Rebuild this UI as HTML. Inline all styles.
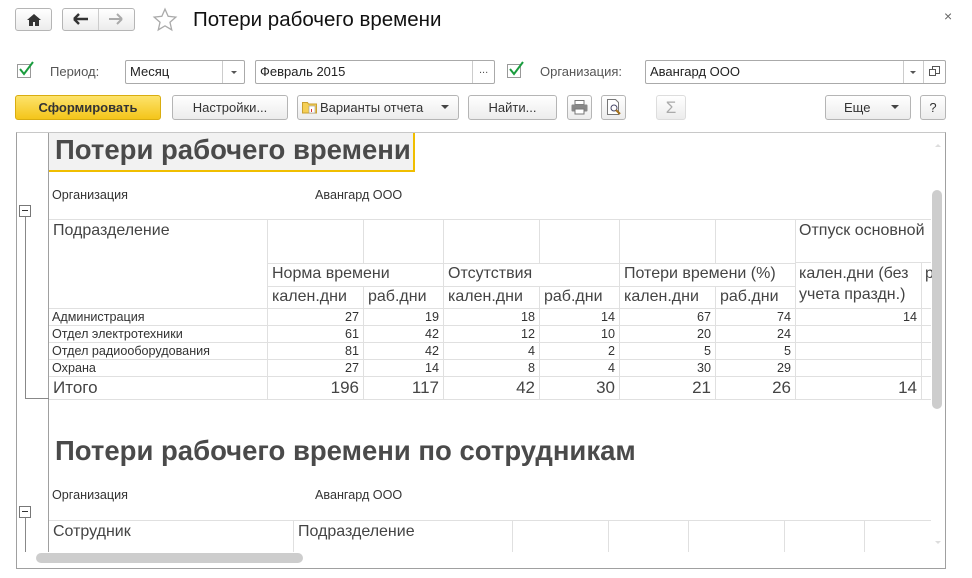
<!DOCTYPE html>
<html><head><meta charset="utf-8"><style>
*{margin:0;padding:0;box-sizing:border-box}
body{width:972px;height:578px;background:#fff;font-family:"Liberation Sans",Arial,sans-serif;position:relative;overflow:hidden;color:#333}
.a{position:absolute}
.btn{position:absolute;border:1px solid #b5b5b5;border-radius:3px;background:linear-gradient(#fff,#ececec);font-size:13px;color:#333;text-align:center;line-height:23px;height:25px}
.inp{position:absolute;border:1px solid #aaa;border-radius:2px;background:#fff;height:24px;font-size:13px;color:#222;line-height:22px;padding-left:4px}
.chk{position:absolute;width:14px;height:14px;border:1px solid #999;background:#fff}
.lbl{position:absolute;font-size:13px;color:#555}
.hl{position:absolute;height:1px;background:#e0e0e0}
.vl{position:absolute;width:1px;background:#e0e0e0}
.t{position:absolute;font-size:16px;color:#444;white-space:nowrap}
.s{position:absolute;font-size:12.6px;color:#333;white-space:nowrap}
.r{text-align:right}
</style></head><body>
<div class="btn" style="left:15px;top:8px;width:37px;height:23px;line-height:21px">
<svg width="14" height="12" viewBox="0 0 14 12" style="margin-top:5px"><path d="M7 0L0 6h2v6h4V8h2v4h4V6h2z" fill="#333"/></svg></div>
<div class="btn" style="left:62px;top:8px;width:73px;height:23px"></div>
<div class="a" style="left:98px;top:9px;width:1px;height:21px;background:#ccc"></div>
<svg class="a" style="left:73px;top:13px" width="16" height="12"><path d="M1 6h14M1 6l5-5M1 6l5 5" stroke="#333" stroke-width="2.4" fill="none"/></svg>
<svg class="a" style="left:108px;top:13px" width="16" height="12"><path d="M1 6h13M14 6l-5-5M14 6l-5 5" stroke="#aaa" stroke-width="2" fill="none"/></svg>
<svg class="a" style="left:152px;top:7px" width="26" height="26" viewBox="0 0 24 24"><path d="M12 2l2.9 6.6 7.1.7-5.4 4.8 1.6 7L12 17.4 5.8 21.1l1.6-7L2 9.3l7.1-.7z" fill="none" stroke="#aaa" stroke-width="1.2"/></svg>
<div class="a" style="left:193px;top:8px;font-size:20.5px;color:#111">Потери рабочего времени</div>
<div class="a" style="left:944px;top:8px;font-size:14px;color:#666">×</div>
<div class="chk" style="left:17px;top:64px"></div>
<svg class="a" style="left:17px;top:60px" width="18" height="18"><path d="M3 9l4 5 9-12" stroke="#1a9c3e" stroke-width="2" fill="none"/></svg>
<div class="lbl" style="left:50px;top:64px">Период:</div>
<div class="inp" style="left:125px;top:60px;width:120px">Месяц</div>
<div class="a" style="left:222px;top:61px;width:1px;height:22px;background:#ccc"></div>
<div class="a" style="left:231px;top:71px;border:3px solid transparent;border-top:3px solid #555"></div>
<div class="inp" style="left:255px;top:60px;width:240px">Февраль 2015</div>
<div class="a" style="left:472px;top:61px;width:1px;height:22px;background:#ccc"></div>
<div class="a" style="left:479px;top:64px;font-size:11px;color:#555">...</div>
<div class="chk" style="left:507px;top:64px"></div>
<svg class="a" style="left:507px;top:60px" width="18" height="18"><path d="M3 9l4 5 9-12" stroke="#1a9c3e" stroke-width="2" fill="none"/></svg>
<div class="lbl" style="left:540px;top:64px">Организация:</div>
<div class="inp" style="left:645px;top:60px;width:301px">Авангард ООО</div>
<div class="a" style="left:903px;top:61px;width:1px;height:22px;background:#ccc"></div>
<div class="a" style="left:923px;top:61px;width:1px;height:22px;background:#ccc"></div>
<div class="a" style="left:910px;top:71px;border:3px solid transparent;border-top:3px solid #555"></div>
<svg class="a" style="left:929px;top:66px" width="11" height="11"><rect x="3.5" y="0.5" width="7" height="7" fill="none" stroke="#555"/><rect x="0.5" y="3.5" width="6" height="6" fill="#fff" stroke="#555"/></svg>
<div class="btn" style="left:15px;top:95px;width:146px;background:linear-gradient(#fde36b,#f4c51a);border-color:#d9ad10;font-weight:bold;color:#333">Сформировать</div>
<div class="btn" style="left:172px;top:95px;width:116px">Настройки...</div>
<div class="btn" style="left:297px;top:95px;width:162px;text-align:left;padding-left:22px">Варианты отчета</div>
<svg class="a" style="left:302px;top:100px" width="16" height="14"><path d="M0.5 2.5h5l1 1.5h8v9h-14z" fill="#f5cf55" stroke="#c9a030"/><rect x="7" y="6" width="6" height="7" fill="#fff" stroke="#999" stroke-width=".6"/><rect x="9" y="9" width="1" height="3" fill="#d33"/></svg>
<div class="a" style="left:441px;top:105px;border:4px solid transparent;border-top:4px solid #444"></div>
<div class="btn" style="left:468px;top:95px;width:89px">Найти...</div>
<div class="btn" style="left:567px;top:95px;width:25px"></div>
<svg class="a" style="left:571px;top:100px" width="17" height="15"><rect x="4" y="0.5" width="9" height="4" fill="#fff" stroke="#777"/><rect x="0.5" y="4.5" width="16" height="7" rx="1" fill="#888"/><rect x="4" y="9" width="9" height="5" fill="#fff" stroke="#777"/></svg>
<div class="btn" style="left:601px;top:95px;width:25px"></div>
<svg class="a" style="left:606px;top:99px" width="16" height="17"><path d="M1.5 .5h8l3 3v12h-11z" fill="#fff" stroke="#777"/><circle cx="8" cy="9" r="3" fill="none" stroke="#446"/><path d="M10 11l4 4" stroke="#a5711a" stroke-width="2"/></svg>
<div class="btn" style="left:656px;top:95px;width:30px;color:#aaa;font-size:17px;border-color:#ddd">Σ</div>
<div class="btn" style="left:825px;top:95px;width:86px;text-align:left;padding-left:18px">Еще</div>
<div class="a" style="left:891px;top:105px;border:4px solid transparent;border-top:4px solid #444"></div>
<div class="btn" style="left:920px;top:95px;width:26px">?</div>
<div class="a" style="left:16px;top:132px;width:930px;height:437px;border:1px solid #a0a0a0;border-top-color:#c8c8c8"></div>
<div class="a" style="left:48px;top:133px;width:1px;height:435px;background:#a0a0a0"></div>
<div class="a" style="left:49px;top:133px;width:366px;height:39px;background:#f2f2f2;border-right:2px solid #f0be00;border-bottom:2px solid #f0be00"></div>
<div class="a" style="left:55px;top:134px;font-size:27.5px;font-weight:bold;color:#4a4a4a">Потери рабочего времени</div>
<div class="s" style="left:52px;top:188px">Организация</div>
<div class="s" style="left:315px;top:188px">Авангард ООО</div>
<div class="a" style="left:19px;top:205px;width:12px;height:12px;border:1px solid #777;background:#fff"></div>
<div class="a" style="left:22px;top:210px;width:6px;height:1px;background:#333"></div>
<div class="a" style="left:25px;top:217px;width:1px;height:182px;background:#888"></div>
<div class="a" style="left:25px;top:398px;width:24px;height:1px;background:#888"></div>
<div class="hl" style="left:49px;top:219px;width:882px"></div>
<div class="hl" style="left:267px;top:263px;width:528px"></div>
<div class="hl" style="left:267px;top:286px;width:528px"></div>
<div class="hl" style="left:49px;top:308px;width:882px"></div>
<div class="hl" style="left:49px;top:325px;width:882px"></div>
<div class="hl" style="left:49px;top:342px;width:882px"></div>
<div class="hl" style="left:49px;top:359px;width:882px"></div>
<div class="hl" style="left:49px;top:376px;width:882px"></div>
<div class="hl" style="left:49px;top:399px;width:882px"></div>
<div class="hl" style="left:795px;top:262px;width:136px"></div>
<div class="vl" style="left:267px;top:219px;height:180px"></div>
<div class="vl" style="left:363px;top:219px;height:44px"></div>
<div class="vl" style="left:363px;top:286px;height:113px"></div>
<div class="vl" style="left:443px;top:219px;height:180px"></div>
<div class="vl" style="left:539px;top:219px;height:44px"></div>
<div class="vl" style="left:539px;top:286px;height:113px"></div>
<div class="vl" style="left:619px;top:219px;height:180px"></div>
<div class="vl" style="left:715px;top:219px;height:44px"></div>
<div class="vl" style="left:715px;top:286px;height:113px"></div>
<div class="vl" style="left:795px;top:219px;height:180px"></div>
<div class="vl" style="left:921px;top:262px;height:137px"></div>
<div class="t" style="left:53px;top:222px">Подразделение</div>
<div class="t" style="left:799px;top:222px">Отпуск основной</div>
<div class="t" style="left:272px;top:265px">Норма времени</div>
<div class="t" style="left:448px;top:265px">Отсутствия</div>
<div class="t" style="left:624px;top:265px">Потери времени (%)</div>
<div class="t" style="left:799px;top:265px">кален.дни (без</div>
<div class="t" style="left:799px;top:286px">учета праздн.)</div>
<div class="t" style="left:925px;top:265px">р</div>
<div class="t" style="left:272px;top:288px">кален.дни</div>
<div class="t" style="left:368px;top:288px">раб.дни</div>
<div class="t" style="left:448px;top:288px">кален.дни</div>
<div class="t" style="left:544px;top:288px">раб.дни</div>
<div class="t" style="left:624px;top:288px">кален.дни</div>
<div class="t" style="left:720px;top:288px">раб.дни</div>
<div class="s" style="left:52px;top:310px">Администрация</div>
<div class="s" style="left:52px;top:327px">Отдел электротехники</div>
<div class="s" style="left:52px;top:344px">Отдел радиооборудования</div>
<div class="s" style="left:52px;top:361px">Охрана</div>
<div class="t" style="left:53px;top:378px;font-size:17px">Итого</div>
<div class="a" style="left:267px;top:310px;width:96px"><div class="s r" style="right:4px">27</div></div>
<div class="a" style="left:267px;top:327px;width:96px"><div class="s r" style="right:4px">61</div></div>
<div class="a" style="left:267px;top:344px;width:96px"><div class="s r" style="right:4px">81</div></div>
<div class="a" style="left:267px;top:361px;width:96px"><div class="s r" style="right:4px">27</div></div>
<div class="a" style="left:363px;top:310px;width:80px"><div class="s r" style="right:4px">19</div></div>
<div class="a" style="left:363px;top:327px;width:80px"><div class="s r" style="right:4px">42</div></div>
<div class="a" style="left:363px;top:344px;width:80px"><div class="s r" style="right:4px">42</div></div>
<div class="a" style="left:363px;top:361px;width:80px"><div class="s r" style="right:4px">14</div></div>
<div class="a" style="left:443px;top:310px;width:96px"><div class="s r" style="right:4px">18</div></div>
<div class="a" style="left:443px;top:327px;width:96px"><div class="s r" style="right:4px">12</div></div>
<div class="a" style="left:443px;top:344px;width:96px"><div class="s r" style="right:4px">4</div></div>
<div class="a" style="left:443px;top:361px;width:96px"><div class="s r" style="right:4px">8</div></div>
<div class="a" style="left:539px;top:310px;width:80px"><div class="s r" style="right:4px">14</div></div>
<div class="a" style="left:539px;top:327px;width:80px"><div class="s r" style="right:4px">10</div></div>
<div class="a" style="left:539px;top:344px;width:80px"><div class="s r" style="right:4px">2</div></div>
<div class="a" style="left:539px;top:361px;width:80px"><div class="s r" style="right:4px">4</div></div>
<div class="a" style="left:619px;top:310px;width:96px"><div class="s r" style="right:4px">67</div></div>
<div class="a" style="left:619px;top:327px;width:96px"><div class="s r" style="right:4px">20</div></div>
<div class="a" style="left:619px;top:344px;width:96px"><div class="s r" style="right:4px">5</div></div>
<div class="a" style="left:619px;top:361px;width:96px"><div class="s r" style="right:4px">30</div></div>
<div class="a" style="left:715px;top:310px;width:80px"><div class="s r" style="right:4px">74</div></div>
<div class="a" style="left:715px;top:327px;width:80px"><div class="s r" style="right:4px">24</div></div>
<div class="a" style="left:715px;top:344px;width:80px"><div class="s r" style="right:4px">5</div></div>
<div class="a" style="left:715px;top:361px;width:80px"><div class="s r" style="right:4px">29</div></div>
<div class="a" style="left:795px;top:310px;width:126px"><div class="s r" style="right:4px">14</div></div>
<div class="a" style="left:267px;top:378px;width:96px"><div class="t r" style="right:4px;font-size:17px">196</div></div>
<div class="a" style="left:363px;top:378px;width:80px"><div class="t r" style="right:4px;font-size:17px">117</div></div>
<div class="a" style="left:443px;top:378px;width:96px"><div class="t r" style="right:4px;font-size:17px">42</div></div>
<div class="a" style="left:539px;top:378px;width:80px"><div class="t r" style="right:4px;font-size:17px">30</div></div>
<div class="a" style="left:619px;top:378px;width:96px"><div class="t r" style="right:4px;font-size:17px">21</div></div>
<div class="a" style="left:715px;top:378px;width:80px"><div class="t r" style="right:4px;font-size:17px">26</div></div>
<div class="a" style="left:795px;top:378px;width:126px"><div class="t r" style="right:4px;font-size:17px">14</div></div>
<div class="a" style="left:55px;top:435px;font-size:27.5px;font-weight:bold;color:#4a4a4a">Потери рабочего времени по сотрудникам</div>
<div class="s" style="left:52px;top:488px">Организация</div>
<div class="s" style="left:315px;top:488px">Авангард ООО</div>
<div class="a" style="left:19px;top:506px;width:12px;height:12px;border:1px solid #777;background:#fff"></div>
<div class="a" style="left:22px;top:511px;width:6px;height:1px;background:#333"></div>
<div class="a" style="left:25px;top:518px;width:1px;height:35px;background:#888"></div>
<div class="hl" style="left:49px;top:520px;width:882px"></div>
<div class="vl" style="left:293px;top:520px;height:32px"></div>
<div class="vl" style="left:512px;top:520px;height:32px"></div>
<div class="vl" style="left:608px;top:520px;height:32px"></div>
<div class="vl" style="left:688px;top:520px;height:32px"></div>
<div class="vl" style="left:784px;top:520px;height:32px"></div>
<div class="vl" style="left:864px;top:520px;height:32px"></div>
<div class="t" style="left:53px;top:523px">Сотрудник</div>
<div class="t" style="left:298px;top:523px">Подразделение</div>
<div class="a" style="left:17px;top:552px;width:928px;height:16px;background:#fff"></div>
<div class="a" style="left:36px;top:553px;width:267px;height:10px;border-radius:5px;background:#cdcdcd"></div>
<div class="a" style="left:932px;top:190px;width:10px;height:219px;border-radius:5px;background:#cdcdcd"></div>
<div class="a" style="left:935px;top:141px;border:3px solid transparent;border-bottom:3px solid #ddd"></div>
<div class="a" style="left:935px;top:541px;border:3px solid transparent;border-top:3px solid #ddd"></div>
</body></html>
